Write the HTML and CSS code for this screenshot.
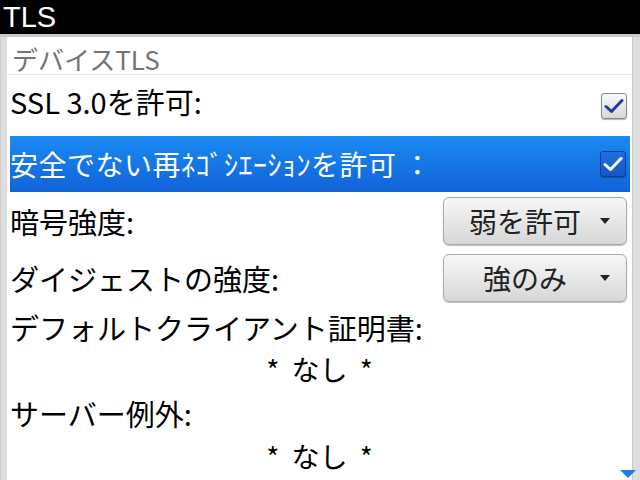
FILE: index.html
```html
<!DOCTYPE html>
<html lang="ja">
<head>
    <meta charset="UTF-8">
    <title>TLS</title>
    <link rel="stylesheet" href="styles.css">
</head>
<body>
    <div class="titlebar">TLS</div>

    <div class="screen">
        <div class="panel">
            <div class="section-title">デバイスTLS</div>

            <div class="row row-ssl">
                <span class="label">SSL 3.0を許可:</span>
                <span class="checkbox">
                    <svg width="20" height="16" viewBox="0 0 20 16"><path d="M2 8.5 L7.5 13.5 L18 2.5" fill="none" stroke="#1b3fa6" stroke-width="3" stroke-linecap="round" stroke-linejoin="round"/></svg>
                </span>
            </div>

            <div class="row row-selected">
                <span class="label">安全でない再ﾈｺﾞｼｴｰｼｮﾝを許可 ：</span>
                <span class="checkbox checkbox-selected">
                    <svg width="20" height="16" viewBox="0 0 20 16"><path d="M2 8.5 L7.5 13.5 L18 2.5" fill="none" stroke="#fff" stroke-width="3" stroke-linecap="round" stroke-linejoin="round"/></svg>
                </span>
            </div>

            <div class="row row-choice">
                <span class="label">暗号強度:</span>
                <span class="dropdown"><span class="dropdown-text">弱を許可</span><span class="arrow"></span></span>
            </div>

            <div class="row row-choice">
                <span class="label">ダイジェストの強度:</span>
                <span class="dropdown"><span class="dropdown-text">強のみ</span><span class="arrow"></span></span>
            </div>

            <div class="row row-label">
                <span class="label">デフォルトクライアント証明書:</span>
            </div>
            <div class="value">* なし *</div>

            <div class="row row-label row-label-2">
                <span class="label">サーバー例外:</span>
            </div>
            <div class="value value-last">* なし *</div>
        </div>
        <span class="scroll-down"></span>
    </div>
</body>
</html>
```

FILE: styles.css
```css
body {
    margin: 0;
    width: 640px;
    height: 480px;
    overflow: hidden;
    font-family: "Noto Sans CJK JP", "Noto Sans", sans-serif;
    background-color: #fff;
}
.titlebar {
    height: 34px;
    line-height: 34px;
    background-color: #000;
    color: #fff;
    font-family: "Liberation Sans", "Noto Sans", sans-serif;
    font-size: 29px;
    padding-left: 3px;
    border-bottom: 3px solid #c9c9c9;
}
.screen {
    position: relative;
    height: 443px;
    background-color: #dedede;
    padding: 0 7px 0 6px;
    border-left: 1px solid #cfcfcf;
    box-sizing: border-box;
}
.panel {
    background-color: #fff;
    height: 100%;
    border-right: 1px solid #c8c8c8;
}
.section-title {
    height: 38px;
    line-height: 44px;
    padding-left: 5px;
    font-size: 26px;
    color: #747474;
    border-bottom: 1px solid #e2e2e2;
    box-sizing: border-box;
}
.row {
    display: flex;
    justify-content: space-between;
    align-items: center;
    padding: 0 5px 0 3px;
}
.label {
    font-size: 29px;
    color: #000;
    white-space: nowrap;
}
.row-ssl {
    height: 61px;
    align-items: flex-start;
}
.row-ssl .label {
    margin-top: 5px;
}
.row-ssl .checkbox {
    margin-top: 18px;
}
.row-selected {
    height: 56px;
    margin: 0 2px 0 3px;
    padding: 0 4px 0 0;
    background: linear-gradient(#1a8bf2, #1163d9);
}
.row-selected .label {
    color: #fff;
    font-size: 28px;
    letter-spacing: 0.5px;
}
.checkbox {
    width: 24px;
    height: 24px;
    border: 1px solid #8a8a8a;
    border-radius: 3px;
    background: linear-gradient(#fafafa, #d6d6d6);
    display: flex;
    align-items: center;
    justify-content: center;
    box-shadow: 0 1px 1px rgba(0,0,0,0.3);
}
.checkbox-selected {
    border-color: #0d3e9a;
    background: linear-gradient(#1f6fe0, #1656c4);
}
.row-choice {
    height: 57px;
}
.dropdown {
    width: 184px;
    height: 48px;
    border: 1px solid #a9a9a9;
    border-radius: 6px;
    background: linear-gradient(#f7f7f7, #d7d7d7);
    box-sizing: border-box;
    display: flex;
    align-items: center;
    padding: 0 16px 0 12px;
    box-shadow: 0 1px 1px rgba(0,0,0,0.25);
}
.dropdown-text {
    flex: 1;
    text-align: center;
    font-size: 28px;
    color: #222;
}
.arrow {
    width: 0;
    height: 0;
    margin-left: 6px;
    border-left: 5px solid transparent;
    border-right: 5px solid transparent;
    border-top: 6px solid #222;
}
.row-label {
    height: 42px;
}
.row-label-2 {
    height: 46px;
}
.value {
    height: 42px;
    line-height: 42px;
    text-align: center;
    font-size: 28px;
    word-spacing: 6px;
    color: #000;
}
.value-last {
    height: 40px;
    line-height: 40px;
}
.scroll-down {
    position: absolute;
    right: 4px;
    bottom: 2px;
    width: 0;
    height: 0;
    border-left: 8px solid transparent;
    border-right: 8px solid transparent;
    border-top: 8px solid #1b7fe8;
}
```
